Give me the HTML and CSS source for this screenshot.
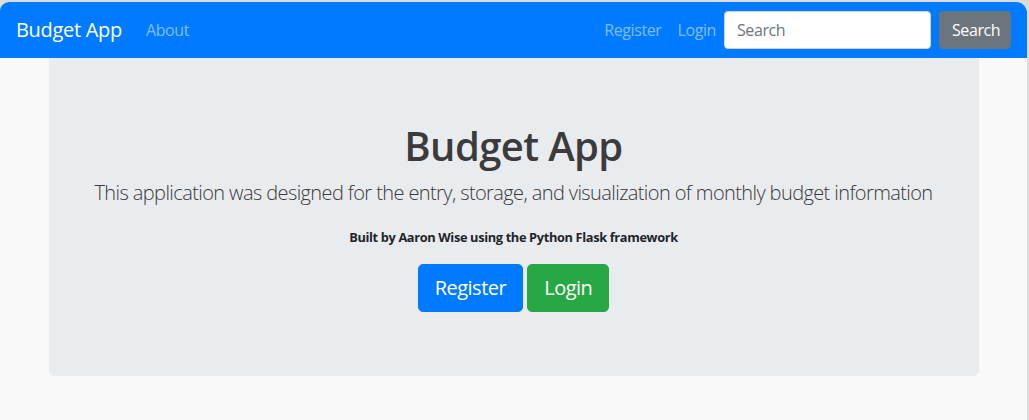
FILE: index.html
```html
<!DOCTYPE html>
<html lang="en">
<head>
<meta charset="utf-8">
<title>Budget App</title>
<link rel="stylesheet" href="styles.css">
</head>
<body>
<div class="window">
  <nav class="navbar">
    <a class="brand" href="#">Budget App</a>
    <ul class="nav-left">
      <li><a class="nav-link" href="#">About</a></li>
    </ul>
    <ul class="nav-right">
      <li><a class="nav-link" href="#">Register</a></li>
      <li><a class="nav-link" href="#">Login</a></li>
    </ul>
    <form class="search-form">
      <input class="search-input" type="search" placeholder="Search">
      <button class="btn btn-secondary" type="button">Search</button>
    </form>
  </nav>
  <main class="container">
    <section class="jumbotron">
      <h1 class="title">Budget App</h1>
      <p class="lead">This application was designed for the entry, storage, and visualization of monthly budget information</p>
      <p class="credit"><small><b>Built by Aaron Wise using the Python Flask framework</b></small></p>
      <div class="actions">
        <a class="btn btn-lg btn-primary" href="#">Register</a>
        <a class="btn btn-lg btn-success" href="#">Login</a>
      </div>
    </section>
  </main>
</div>
</body>
</html>
```

FILE: styles.css
```css
* { box-sizing: border-box; }
html, body { margin: 0; padding: 0; height: 100%; }
body {
  background: #dcdcdc;
  font-family: "Open Sans", "Noto Sans", sans-serif;
  font-size: 16px;
  line-height: 1.5;
  color: #212529;
}
.window {
  margin-top: 2px;
  margin-right: 2px;
  height: calc(100% - 2px);
  background: #f9f9f9;
  border-radius: 9px 11px 0 0;
  overflow: hidden;
}
.navbar {
  display: flex;
  align-items: center;
  height: 56px;
  padding: 8px 16px;
  background: #007bff;
}
.brand {
  color: #fff;
  text-decoration: none;
  font-size: 20px;
  line-height: 30px;
  margin-right: 16px;
  letter-spacing: -0.3px;
}
.nav-left, .nav-right {
  list-style: none;
  margin: 0;
  padding: 0;
  display: flex;
}
.nav-left { margin-right: auto; }
.nav-link {
  display: block;
  padding: 8px 8px;
  color: rgba(255,255,255,.5);
  text-decoration: none;
  font-size: 16px;
  letter-spacing: -0.4px;
}
.search-form { display: flex; align-items: center; }
.search-input {
  width: 207px;
  height: 38px;
  padding: 6px 12px;
  font: inherit;
  font-size: 16px;
  color: #495057;
  background: #fff;
  border: 1px solid #ced4da;
  border-radius: 4px;
  margin-right: 8px;
  letter-spacing: -0.4px;
}
.search-input::placeholder { color: #6c757d; }
.btn {
  display: inline-block;
  font: inherit;
  font-size: 16px;
  line-height: 1.5;
  padding: 6px 12px;
  border: 1px solid transparent;
  border-radius: 4px;
  color: #fff;
  text-decoration: none;
  text-align: center;
  letter-spacing: -0.4px;
}
.btn-secondary { background: #6c757d; border-color: #6c757d; width: 72px; }
.btn-lg {
  font-size: 20px;
  padding: 8px 16px;
  border-radius: 5px;
  letter-spacing: -0.5px;
}
.btn-primary { background: #007bff; border-color: #007bff; }
.btn-success { background: #28a745; border-color: #28a745; }
.container {
  width: 960px;
  margin: 0 auto;
  padding: 0 15px;
}
.jumbotron {
  background: #e9ecef;
  padding: 64px 32px;
  border-radius: 0 0 5px 5px;
  text-align: center;
}
.title {
  margin: 0 0 8px;
  font-size: 40px;
  line-height: 48px;
  font-weight: 600;
  color: #3b3b3b;
  letter-spacing: -0.6px;
}
.lead {
  margin: 0 0 16px;
  font-size: 20px;
  line-height: 30px;
  font-weight: 300;
  color: #3a3a3a;
  letter-spacing: -0.6px;
}
.credit {
  margin: 0 0 15px;
  line-height: 24px;
}
.credit small { font-size: 12.8px; letter-spacing: -0.35px; }
.actions { display: flex; justify-content: center; gap: 4px; }
```
